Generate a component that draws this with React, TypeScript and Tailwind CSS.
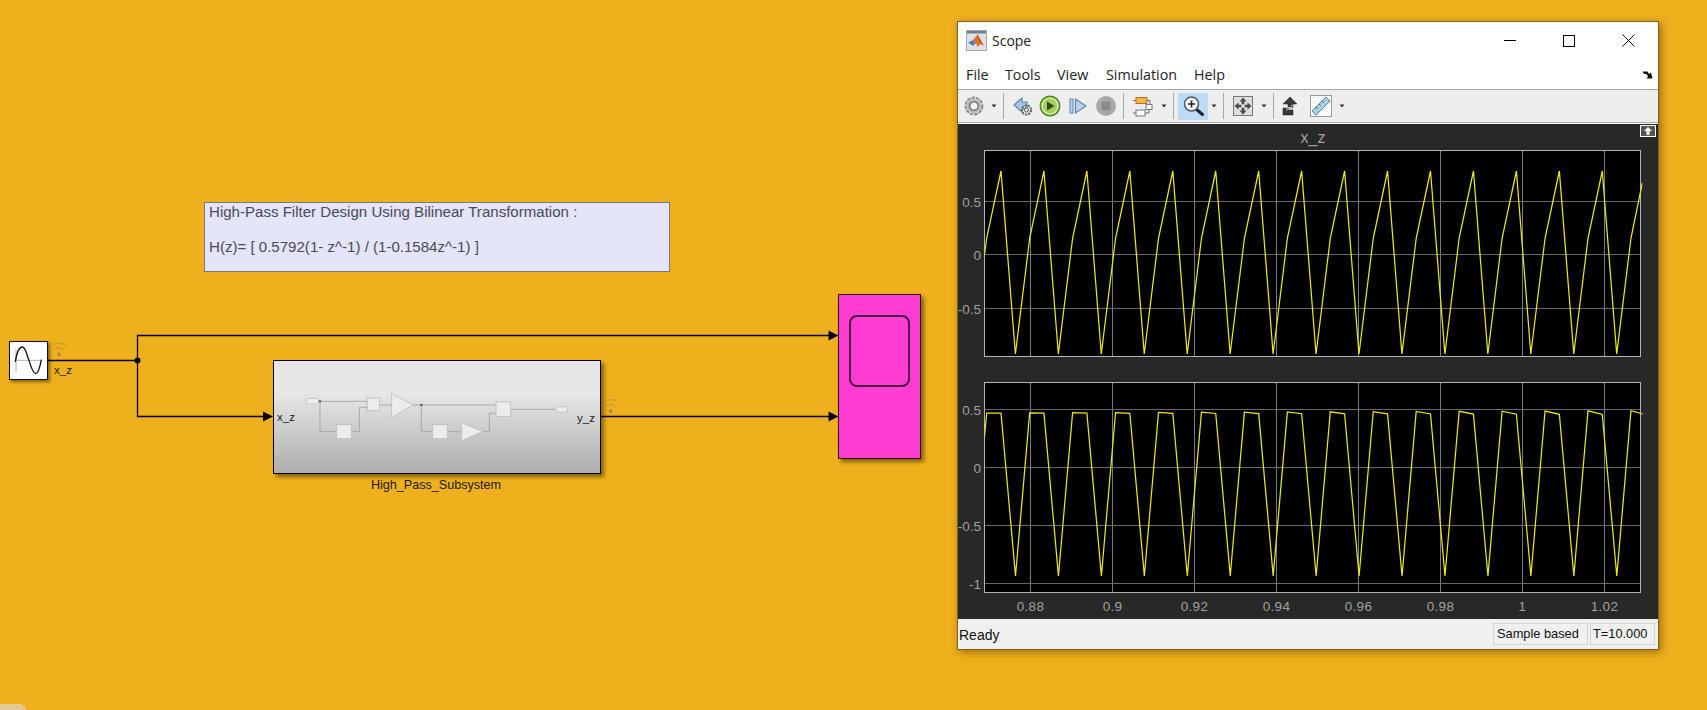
import * as React from 'react';

const YELLOW = '#e9e91c';

const PERIOD = 42.95;

function topTrace(): string {
  const pts: string[] = ['984.5,255', '986.7,238'];
  for (let k = 0; k < 15; k += 1) {
    const x = 1001 + PERIOD * k;
    pts.push(`${x},171`, `${x + 14.4},354`, `${x + 28.7},238`);
  }
  pts.push('1642.3,183');
  return pts.join(' ');
}

function bottomTrace(): string {
  const pts: string[] = ['984.5,437'];
  for (let k = 0; k < 16; k += 1) {
    const x = 986.7 + PERIOD * k;
    pts.push(`${x},${413 - k * 0.15}`, `${x + 14.3},${413 + k * 0.1}`, `${x + 28.8},576`);
  }
  return pts.join(' ');
}

interface ScopeAxesProps {
  top: number;
  height: number;
  axTop: number;
  axBottom: number;
  yTicks: [string, number][];
  points: string;
  title?: string;
  xLabels?: boolean;
}

const X_GRID: [string, number][] = [
  ['0.88', 1030.5],
  ['0.9', 1112.5],
  ['0.92', 1194.5],
  ['0.94', 1276.5],
  ['0.96', 1358.5],
  ['0.98', 1440.5],
  ['1', 1522.5],
  ['1.02', 1604.5],
];

function ScopeAxes({ top, height, axTop, axBottom, yTicks, points, title, xLabels }: ScopeAxesProps) {
  const clipId = `axes-clip-${top}`;
  return (
    <svg
      width={700}
      height={height}
      viewBox={`958 ${top} 700 ${height}`}
      className="block shrink-0"
      style={{ fontFamily: '"Liberation Sans", Arial, sans-serif' }}
    >
      <clipPath id={clipId}>
        <rect x={984.5} y={axTop} width={658} height={axBottom - axTop} />
      </clipPath>
      <rect x={984.5} y={axTop} width={656} height={axBottom - axTop} fill="#000" />
      {X_GRID.map(([label, x]) => (
        <line key={label} x1={x} x2={x} y1={axTop} y2={axBottom} stroke="#7c7c7c" />
      ))}
      {yTicks.map(([label, y]) => (
        <line key={label} x1={984.5} x2={1640.5} y1={y} y2={y} stroke="#666" />
      ))}
      <rect x={984.5} y={axTop} width={656} height={axBottom - axTop} fill="none" stroke="#b4b4b4" />
      <polyline
        points={points}
        fill="none"
        stroke={YELLOW}
        strokeWidth={1.25}
        strokeLinejoin="miter"
        clipPath={`url(#${clipId})`}
      />
      {yTicks.map(([label, y]) => (
        <text key={label} x={981} y={y + 5} textAnchor="end" fontSize={13.5} fill="#a0a0a0">
          {label}
        </text>
      ))}
      {xLabels &&
        X_GRID.map(([label, x]) => (
          <text key={label} x={x} y={610.5} textAnchor="middle" fontSize={13.5} letterSpacing={0.3} fill="#a0a0a0">
            {label}
          </text>
        ))}
      {title && (
        <text x={1313} y={143} textAnchor="middle" fontSize={16} fill="#a0a0a0">
          {title}
        </text>
      )}
    </svg>
  );
}

function Caret() {
  return (
    <svg width={10} height={24} viewBox="0 0 10 24" className="shrink-0">
      <path d="M2.5 10.5h5L5 13.5z" fill="#333" />
    </svg>
  );
}

function Sep() {
  return <div className="h-[26px] w-px shrink-0 bg-[#a9a9a9]" />;
}

function Icon({ children }: { children: React.ReactNode }) {
  return (
    <svg width={24} height={24} viewBox="0 0 24 24" className="block shrink-0">
      {children}
    </svg>
  );
}

function GearIcon() {
  return (
    <Icon>
      <circle cx="12" cy="12" r="8.4" fill="none" stroke="#8a8a8a" strokeWidth="2" strokeDasharray="3.6 1" />
      <circle cx="12" cy="12" r="7" fill="#b4b4b4" />
      <circle cx="12" cy="12" r="4.200" fill="#f2f2f2" stroke="#6e6e6e" strokeWidth="1.300" />
    </Icon>
  );
}

function BackIcon() {
  return (
    <Icon>
      <path d="M3 11L11 4v4h5v7h-5v3z" fill="#a7c6e4" stroke="#5f87ab" strokeWidth="1.2" />
      <circle cx="15.5" cy="16" r="4.6" fill="none" stroke="#666" strokeWidth="2" strokeDasharray="2.2 1" />
      <circle cx="15.5" cy="16" r="2" fill="#eee" stroke="#555" />
    </Icon>
  );
}

function PlayIcon() {
  return (
    <Icon>
      <circle cx="12" cy="12" r="9.6" fill="#e8f2d2" stroke="#4f8a16" strokeWidth="1.7" />
      <circle cx="12" cy="12" r="7.4" fill="#a5cf58" />
      <path d="M9 7.5l7.5 4.5L9 16.5z" fill="#2e4a1c" />
    </Icon>
  );
}

function StepIcon() {
  return (
    <Icon>
      <rect x="4" y="5" width="3" height="14" fill="#b9d2ea" stroke="#5f87ab" />
      <path d="M9.5 5L20 12 9.5 19z" fill="#b9d2ea" stroke="#5f87ab" strokeWidth="1.2" />
    </Icon>
  );
}

function StopIcon() {
  return (
    <Icon>
      <circle cx="12" cy="12" r="10" fill="#a9a9a9" />
      <rect x="7.5" y="7.5" width="9" height="9" rx="1" fill="#8b8b8b" />
    </Icon>
  );
}

function BlocksIcon() {
  return (
    <Icon>
      <path d="M2 6.5h4M16 6.5h3v7h-3M2 19h4M14 19h4v-5.500" fill="none" stroke="#666" />
      <rect x="5" y="3.500" width="11" height="6" fill="#f2b64e" stroke="#b27414" />
      <rect x="15" y="10.500" width="6" height="5" fill="#fff" stroke="#777" />
      <rect x="5" y="16" width="9" height="6" fill="#fff" stroke="#777" />
    </Icon>
  );
}

function ZoomIcon() {
  return (
    <Icon>
      <path d="M15 15l6.500 5.500" stroke="#222" strokeWidth="3" strokeLinecap="round" />
      <circle cx="10.500" cy="10" r="7" fill="#f4f8fb" stroke="#4e5a63" strokeWidth="1.500" />
      <path d="M10.500 6.500v7M7 10h7" stroke="#222" strokeWidth="1.600" />
    </Icon>
  );
}

function FitIcon() {
  return (
    <svg width={20} height={20} viewBox="0 0 20 20" className="block shrink-0">
      <rect x="0.500" y="0.500" width="19" height="19" fill="#dedede" stroke="#777" />
      <path
        d="M10 1.500l3.500 4h-2.200v2.800H8.700V5.500H6.500zM10 18.500l3.500-4h-2.200v-2.800H8.700v2.800H6.500zM1.500 10l4-3.500v2.200h2.800v2.600H5.500v2.200zM18.500 10l-4-3.500v2.200h-2.800v2.600h2.800v2.200z"
        fill="#4a4a4a"
      />
    </svg>
  );
}

function StairIcon() {
  return (
    <Icon>
      <path d="M12 3l7 7h-4v4h-5v2h5v5H5v-7h5v-4H5z" fill="#3a3a3a" stroke="#1a1a1a" strokeWidth="0.500" />
      <path d="M14 10.500v3h-5v3" fill="none" stroke="#c4c4c4" />
    </Icon>
  );
}

function RulerIcon() {
  return (
    <Icon>
      <rect x="1.500" y="1.500" width="21" height="21" fill="#fbfbfb" stroke="#9a9a9a" />
      <path d="M3 17L17 3l4 4L7 21z" fill="#a8d0e2" stroke="#5b8ba0" />
      <path d="M7 13l2 2M10 10l2 2M13 7l2 2" stroke="#4d7a8e" />
    </Icon>
  );
}

function MatlabIcon() {
  return (
    <svg width={22} height={21} viewBox="0 0 22 21" className="block shrink-0">
      <rect x="0.500" y="0.500" width="20" height="20" fill="#dfe1e6" stroke="#a6a8ad" />
      <rect x="1" y="1" width="19" height="2.500" fill="#6f7f96" />
      <path d="M2 12.500l5-2.500 3 3-3 3z" fill="#4b83b5" />
      <path d="M7 10l4.500-5.500L15 11l3 5-3.500-2-3 3L10 13z" fill="#e0711c" />
      <path d="M11.500 4.500L15 11l3 5-5-6z" fill="#b8381a" />
    </svg>
  );
}

function ScopeWindow() {
  return (
    <div className="absolute left-[957px] top-[21px] flex h-[629px] w-[702px] flex-col border border-[#7d6228] bg-white shadow-[2px_2px_8px_rgba(70,40,0,0.5)]">
      {/* title bar */}
      <div className="flex h-[37px] shrink-0 items-center pl-[8px] font-['Open_Sans',sans-serif] text-[14px] text-[#222]">
        <MatlabIcon />
        <span className="ml-[4px]">Scope</span>
        <div className="ml-auto flex items-center">
          <div className="h-px w-[12px] bg-black" />
          <div className="ml-[47px] h-[12px] w-[12px] border border-black" />
          <svg width={13} height={13} viewBox="0 0 13 13" className="ml-[47px] mr-[23px]">
            <path d="M0.500 0.500l12 12M12.500 0.500l-12 12" stroke="#111" />
          </svg>
        </div>
      </div>

      {/* menu */}
      <div className="flex h-[30px] shrink-0 items-center pl-[8px] pt-[2px] font-['Open_Sans',sans-serif] text-[14.300px] text-[#222]">
        <span className="w-[39px]">File</span>
        <span className="w-[52px]">Tools</span>
        <span className="w-[49px]">View</span>
        <span className="w-[88px]">Simulation</span>
        <span>Help</span>
        <svg width={12} height={10} viewBox="0 0 12 10" className="ml-auto mr-[4px]">
          <path d="M0.500 1.500h5l1.500 2.500 2-1.500 1.500 6h-6l1.500-2-1.500-2.500H2z" fill="#111" />
        </svg>
      </div>

      {/* toolbar */}
      <div className="flex h-[34px] shrink-0 items-center border-y border-y-[#a8a8a8] bg-[#eeeeee] pl-[4px]">
        <GearIcon />
        <div className="ml-[3px]"><Caret /></div>
        <div className="ml-[4px]"><Sep /></div>
        <div className="ml-[7px]"><BackIcon /></div>
        <div className="ml-[3px]"><PlayIcon /></div>
        <div className="ml-[4px]"><StepIcon /></div>
        <div className="ml-[4px]"><StopIcon /></div>
        <div className="ml-[5px]"><Sep /></div>
        <div className="ml-[7px]"><BlocksIcon /></div>
        <div className="ml-[4px]"><Caret /></div>
        <div className="ml-[4px]"><Sep /></div>
        <div className="ml-[4px] flex h-[27px] w-[30px] shrink-0 items-center justify-center bg-[#bcdcf5]">
          <ZoomIcon />
        </div>
        <div className="ml-[1px]"><Caret /></div>
        <div className="ml-[4px]"><Sep /></div>
        <div className="ml-[9px]"><FitIcon /></div>
        <div className="ml-[6px]"><Caret /></div>
        <div className="ml-[4px]"><Sep /></div>
        <div className="ml-[4px]"><StairIcon /></div>
        <div className="ml-[7px]"><RulerIcon /></div>
        <div className="ml-[4px]"><Caret /></div>
      </div>

      {/* plots */}
      <div className="relative flex h-[496px] shrink-0 flex-col border-t border-t-white bg-[#282828]">
        <ScopeAxes
          top={124}
          height={246}
          axTop={150.5}
          axBottom={356.5}
          title="x_z"
          yTicks={[['0.5', 201.5], ['0', 254.5], ['-0.5', 308.5]]}
          points={topTrace()}
        />
        <ScopeAxes
          top={370}
          height={249}
          axTop={382.5}
          axBottom={592.5}
          xLabels
          yTicks={[['0.5', 409.5], ['0', 467.5], ['-0.5', 525.5], ['-1', 583.5]]}
          points={bottomTrace()}
        />
        <div className="absolute right-[2px] top-[1px] flex h-[12px] w-[16px] items-center justify-center border border-white bg-[#555]">
          <svg width={10} height={8} viewBox="0 0 10 8">
            <path d="M5 0l4 4H6.500v4h-3V4H1z" fill="#fff" />
          </svg>
        </div>
      </div>

      {/* status bar */}
      <div className="flex h-[30px] shrink-0 items-center bg-[#f0f0f0] pl-[1px] font-['Liberation_Sans',Arial,sans-serif] text-[12.800px] text-[#111]">
        <span className="pt-[2px] text-[14px]">Ready</span>
        <div className="ml-auto flex h-[22px] w-[95px] items-center border border-[#d4d4d4] pl-[3px]">
          Sample based
        </div>
        <div className="ml-[2px] mr-[3px] flex h-[22px] w-[65px] items-center border border-[#d4d4d4] pl-[2px]">
          T=10.000
        </div>
      </div>
    </div>
  );
}

function Wifi({ dx = 0, dy = 0 }: { dx?: number; dy?: number }) {
  return (
    <g transform={`translate(${dx} ${dy})`} fill="none" stroke="#8f8454" strokeOpacity="0.55" strokeWidth="1">
      <path d="M52 346 Q59 340 66.500 346" />
      <path d="M54 350 Q59 345.500 64 350" />
      <circle cx="59" cy="354.500" r="2" fill="#8f8454" fillOpacity="0.7" stroke="none" />
    </g>
  );
}

function Wires() {
  return (
    <svg width={1707} height={710} viewBox="0 0 1707 710" className="absolute left-0 top-0">
      <g fill="none" stroke="#000" strokeWidth="1.300">
        <path d="M48 360.500H137.500" />
        <path d="M137.500 360.500V335.500H830" />
        <path d="M137.500 360.500V416.500H264" />
        <path d="M600 416.500H830" />
      </g>
      <circle cx="137.500" cy="360.500" r="3" fill="#000" />
      <path d="M263 411.500L273 416.500L263 421.500z" fill="#000" />
      <path d="M828.500 330.500L838.500 335.500L828.500 340.500z" fill="#000" />
      <path d="M828.500 411.500L838.500 416.500L828.500 421.500z" fill="#000" />
      <Wifi />
      <Wifi dx={551.7} dy={56.5} />
    </svg>
  );
}

function SubsystemGlyph() {
  // inner diagram, drawn at 3x in block-relative units
  return (
    <svg width={326} height={112} viewBox="12 33 978 336" className="absolute left-0 top-0">
      <g fill="none" stroke="#a0a0a0" strokeWidth="2.500">
        <path d="M146 154H292M150 154V245H200M244 245H268V172H292M328 165H365" />
        <path d="M428 165H678M454 165V245H488M532 245H575M638 245H658V190H678M722 178H857" />
      </g>
      <g fill="#ececec" stroke="#bdbdbd" strokeWidth="2.500">
        <rect x="108" y="145" width="38" height="17" rx="8.500" />
        <rect x="200" y="224" width="44" height="42" />
        <rect x="292" y="144" width="36" height="38" />
        <path d="M365 130V203L428 165z" />
        <rect x="488" y="224" width="44" height="42" />
        <path d="M575 218V272L638 245z" />
        <rect x="678" y="156" width="44" height="43" />
        <rect x="857" y="170" width="36" height="17" rx="8.500" />
      </g>
      <circle cx="150" cy="154" r="3.500" fill="#555" />
      <circle cx="454" cy="165" r="3.500" fill="#555" />
    </svg>
  );
}

export default function App() {
  return (
    <div className="relative h-[710px] w-[1707px] overflow-hidden bg-[#eeb01c] font-['Liberation_Sans',Arial,sans-serif]">
      <Wires />

      {/* annotation */}
      <div className="absolute left-[204px] top-[202px] h-[70px] w-[466px] border border-[#77777f] bg-[#e4e4fb] pl-[4px] text-[15.070px] leading-[17.500px] text-[#4a4a5c]">
        <div>High-Pass Filter Design Using Bilinear Transformation :</div>
        <div className="h-[17.500px]" />
        <div>H(z)= [ 0.5792(1- z^-1) / (1-0.1584z^-1) ]</div>
      </div>

      {/* sine source */}
      <div className="absolute left-[9px] top-[341px] h-[39px] w-[39px] border border-[#111] bg-white shadow-[2px_2px_3px_rgba(0,0,0,0.45)]">
        <svg width={37} height={37} viewBox="0 0 111 111" className="block">
          <path d="M16 55H94M18 20V90" fill="none" stroke="#b0b0b0" strokeWidth="3" />
          <path
            d="M16 60C21 25 29 15 37 15C47 15 50 40 57 55C63 75 70 95 77 95C85 95 90 75 94 53"
            fill="none"
            stroke="#111"
            strokeWidth="4"
          />
        </svg>
      </div>
      <span className="absolute left-[54px] top-[364px] text-[11.500px] leading-[13px] text-[#1a1a1a]">x_z</span>

      {/* subsystem */}
      <div className="absolute left-[273px] top-[360px] h-[114px] w-[328px] border border-black bg-gradient-to-b from-[#e6e6e6] from-30% to-[#adadad] shadow-[3px_3px_4px_rgba(0,0,0,0.45)]">
        <SubsystemGlyph />
        <span className="absolute left-[3px] top-[50px] text-[11.500px] leading-[13px] text-[#1a1a1a]">x_z</span>
        <span className="absolute right-[5px] top-[51px] text-[11.500px] leading-[13px] text-[#1a1a1a]">y_z</span>
      </div>
      <span className="absolute left-[356px] top-[478px] w-[160px] text-center text-[12.600px] leading-[14px] text-[#1a1a1a]">
        High_Pass_Subsystem
      </span>

      {/* scope block */}
      <div className="absolute left-[838px] top-[294px] flex h-[165px] w-[83px] justify-center border border-[#2a1020] bg-[#ff3dd3] pt-[20px] shadow-[3px_3px_4px_rgba(0,0,0,0.45)]">
        <div className="h-[72px] w-[61px] rounded-[8px] border-2 border-[#4a0f45]" />
      </div>

      <ScopeWindow />

      {/* stray corner from the editor's status area */}
      <div className="absolute bottom-0 left-0 h-[6px] w-[26px] rounded-tr-[6px] bg-[#e3c995]" />
    </div>
  );
}
